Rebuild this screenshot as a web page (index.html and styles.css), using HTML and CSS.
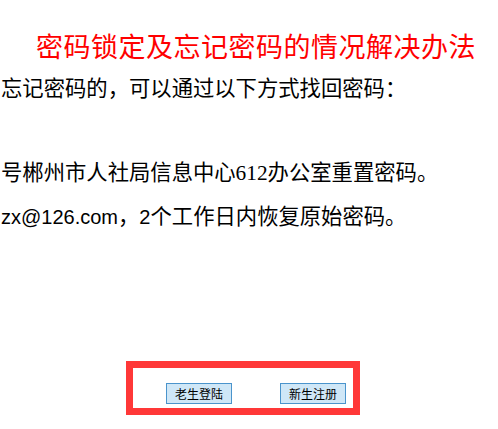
FILE: index.html
```html
<!DOCTYPE html>
<html lang="zh-CN">
<head>
    <meta charset="UTF-8">
    <meta name="viewport" content="width=device-width, initial-scale=1.0">
    <title>密码锁定及忘记密码的情况解决办法</title>
    <link rel="stylesheet" href="styles.css">
</head>
<body>
    <h1 class="title">密码锁定及忘记密码的情况解决办法</h1>

    <div class="notice">
        <p class="line">忘记密码的，可以通过以下方式找回密码：</p>
        <p class="line gap">号郴州市人社局信息中心612办公室重置密码。</p>
        <p class="line mail"><span class="latin">zx@126.com</span>，<span class="latin">2</span>个工作日内恢复原始密码。</p>
    </div>

    <div class="login-box">
        <button class="btn" type="button">老生登陆</button>
        <button class="btn" type="button">新生注册</button>
    </div>
</body>
</html>
```

FILE: styles.css
```css
body {
    margin: 0;
    background: #fff;
    font-family: "Liberation Serif", "Noto Sans CJK SC", serif;
    color: #000;
    overflow: hidden;
}

.title {
    margin: 28px 0 0 36px;
    font-size: 27px;
    font-weight: normal;
    letter-spacing: 0.5px;
    line-height: 40px;
    color: #ff0000;
    white-space: nowrap;
}

.notice {
    padding-left: 1px;
}

.line {
    margin: 0;
    font-size: 21.33px;
    line-height: 42px;
    white-space: nowrap;
}

.line.gap {
    margin-top: 41px;
    line-height: 44px;
}

.line.mail {
    line-height: 44px;
}

.latin {
    font-family: "Liberation Sans", Arial, sans-serif;
    font-size: 20px;
}

.login-box {
    display: flex;
    gap: 48px;
    box-sizing: border-box;
    width: 234px;
    height: 54px;
    margin: 122px 0 0 126px;
    padding: 15px 0 0 33px;
    border: 7px solid #ff3838;
}

.btn {
    width: 66px;
    height: 21px;
    padding: 0;
    background: #cfe7f7;
    border: 1px solid #4a94cc;
    border-radius: 0;
    font-family: "Noto Sans CJK SC", sans-serif;
    font-size: 12px;
    line-height: 19px;
    color: #000;
}
```
